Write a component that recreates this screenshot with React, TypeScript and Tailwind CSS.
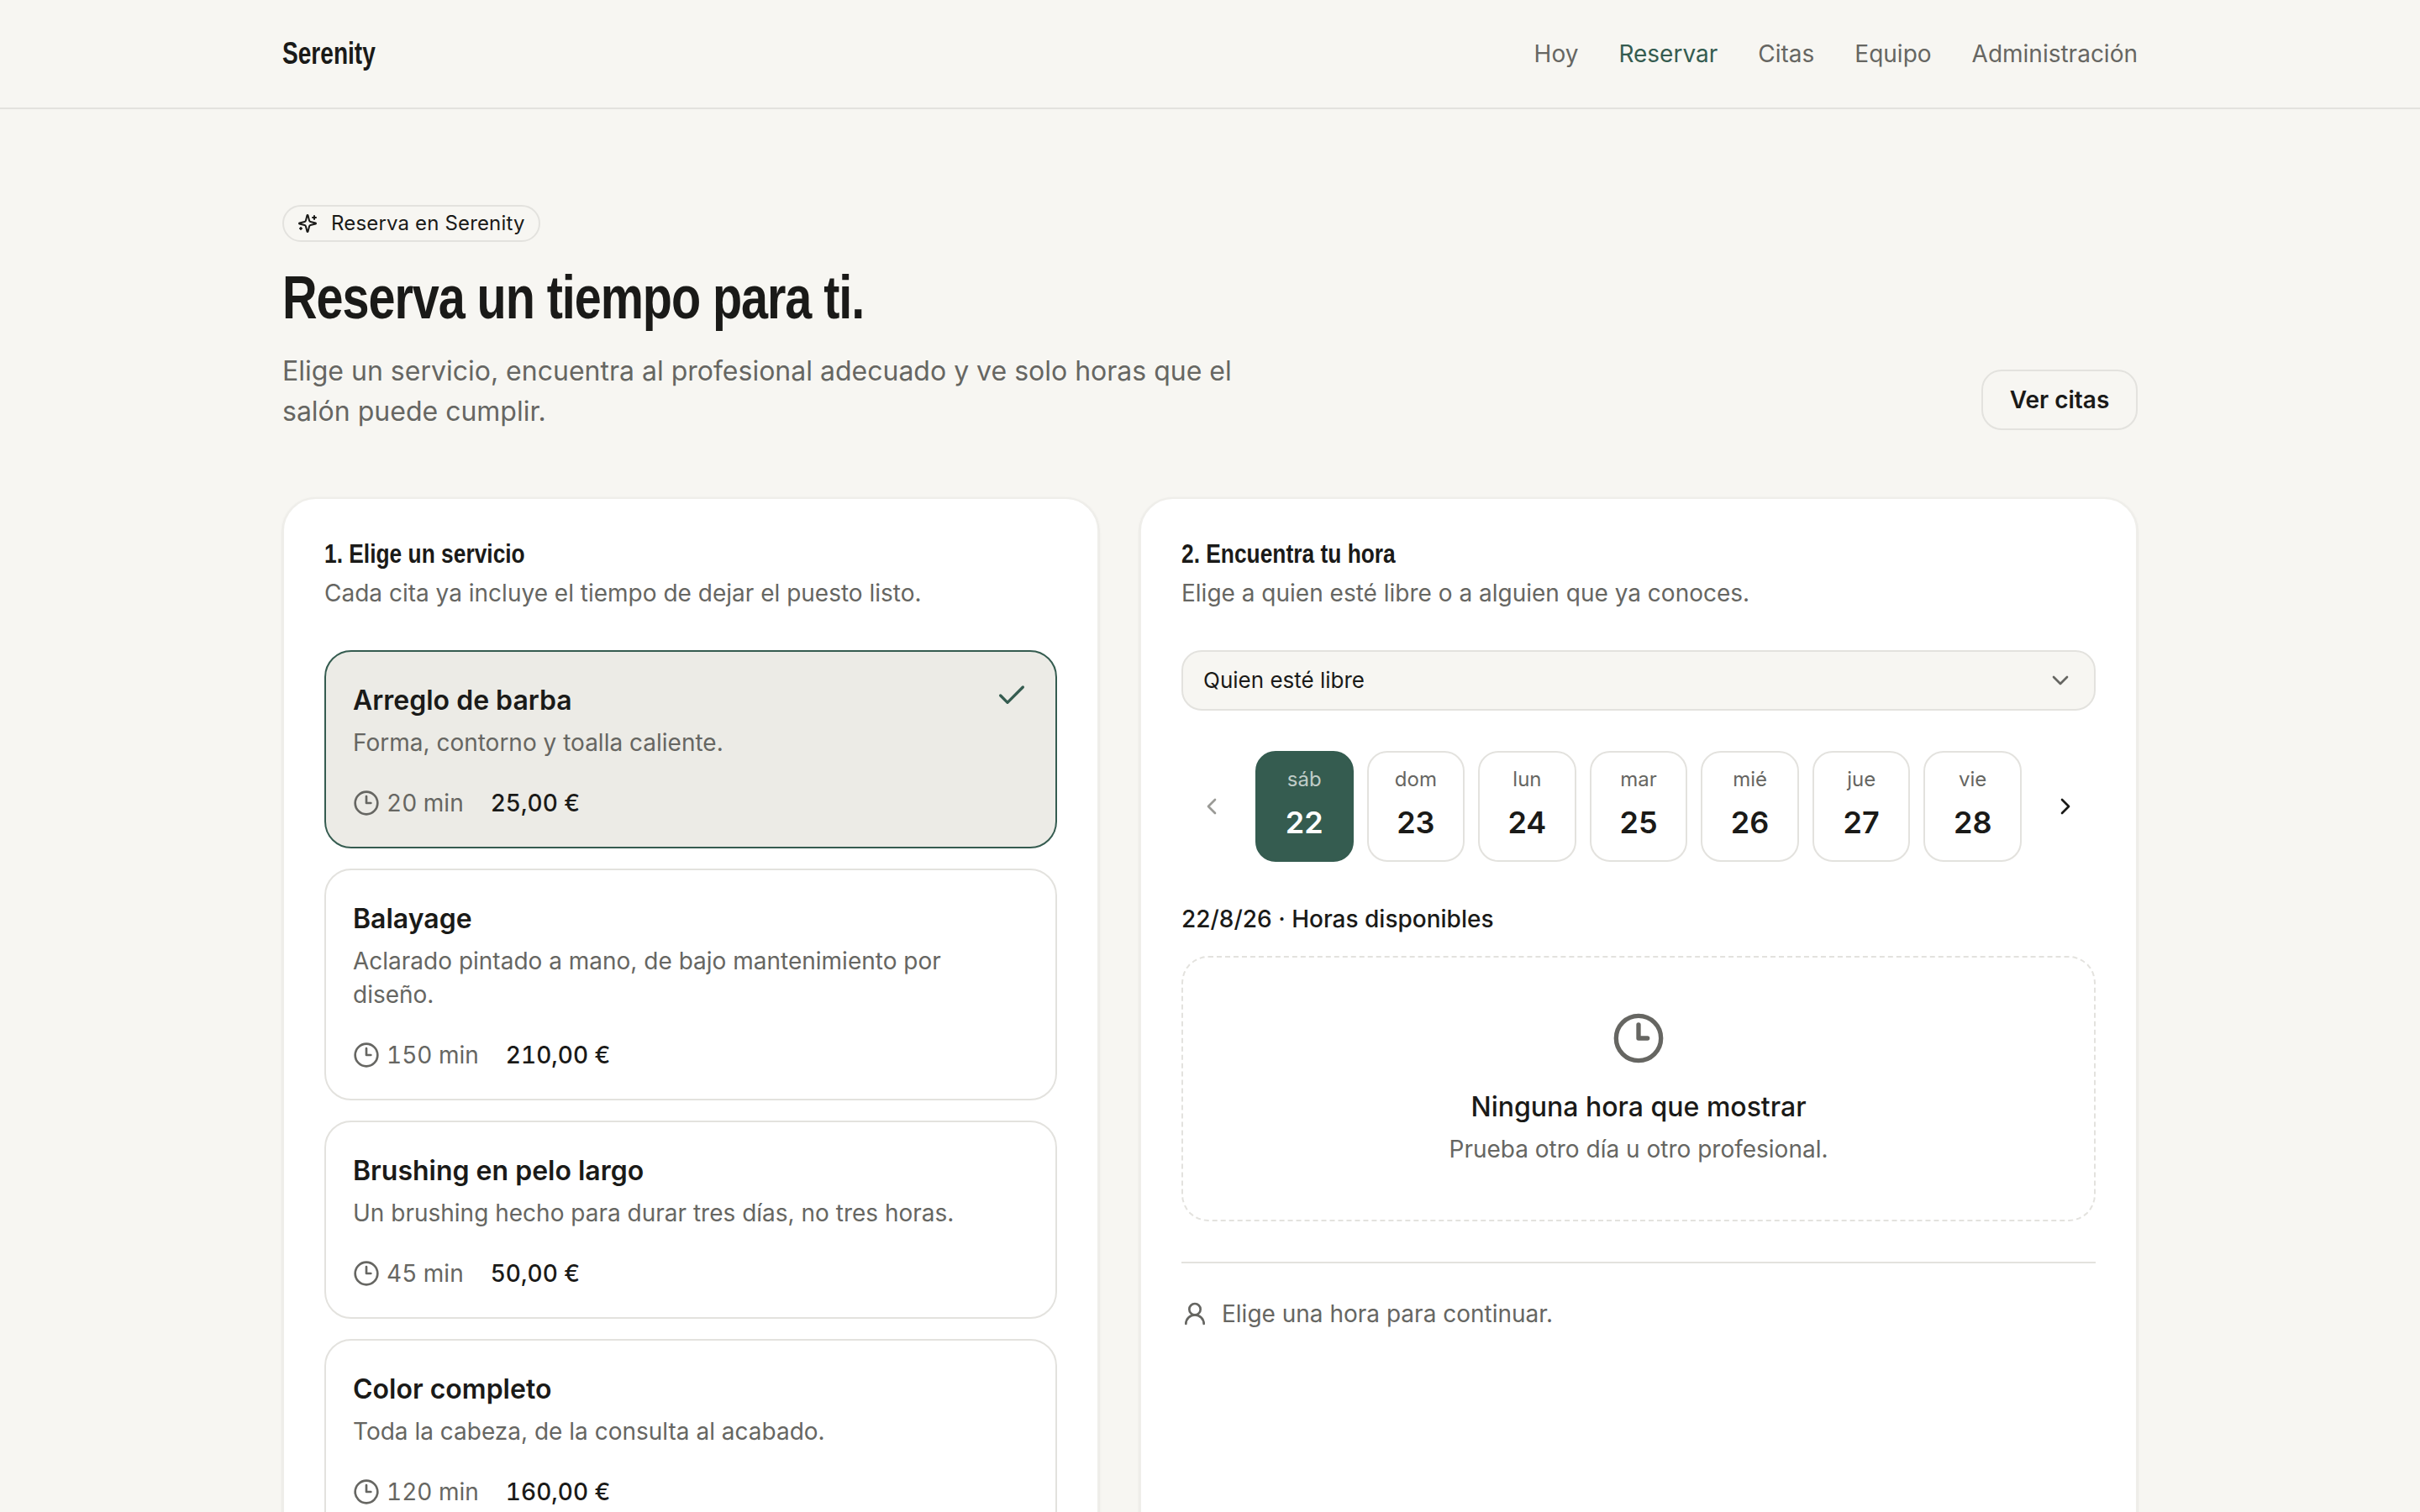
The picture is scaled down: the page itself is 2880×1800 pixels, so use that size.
import { Check, ChevronDown, ChevronLeft, ChevronRight, UserRound } from "lucide-react"

const bodyFont = { fontFamily: "Inter, sans-serif" }

const navItems = ["Hoy", "Reservar", "Citas", "Equipo", "Administración"]

const services = [
  { name: "Arreglo de barba", desc: "Forma, contorno y toalla caliente.", mins: "20 min", price: "25,00 €", selected: true },
  { name: "Balayage", desc: "Aclarado pintado a mano, de bajo mantenimiento por diseño.", mins: "150 min", price: "210,00 €" },
  { name: "Brushing en pelo largo", desc: "Un brushing hecho para durar tres días, no tres horas.", mins: "45 min", price: "50,00 €" },
  { name: "Color completo", desc: "Toda la cabeza, de la consulta al acabado.", mins: "120 min", price: "160,00 €" },
]

const days = [
  { label: "sáb", num: 22, active: true },
  { label: "dom", num: 23 },
  { label: "lun", num: 24 },
  { label: "mar", num: 25 },
  { label: "mié", num: 26 },
  { label: "jue", num: 27 },
  { label: "vie", num: 28 },
]

function ClockIcon({ size, className }: { size: number; className?: string }) {
  return (
    <svg
      width={size}
      height={size}
      viewBox="0 0 24 24"
      fill="none"
      stroke="currentColor"
      strokeWidth="2"
      strokeLinecap="round"
      strokeLinejoin="round"
      className={className}
    >
      <circle cx="12" cy="12" r="10" />
      <path d="M12 6v6h4" />
    </svg>
  )
}

function SparkleIcon() {
  return (
    <svg
      width={24}
      height={24}
      viewBox="0 0 24 24"
      fill="none"
      stroke="currentColor"
      strokeWidth="2"
      strokeLinecap="round"
      strokeLinejoin="round"
    >
      <path d="M9.937 15.5A2 2 0 0 0 8.5 14.063l-6.135-1.582a.5.5 0 0 1 0-.962L8.5 9.936A2 2 0 0 0 9.937 8.5l1.582-6.135a.5.5 0 0 1 .963 0L14.063 8.5A2 2 0 0 0 15.5 9.937l6.135 1.581a.5.5 0 0 1 0 .964L15.5 14.063a2 2 0 0 0-1.437 1.437l-1.582 6.135a.5.5 0 0 1-.963 0z" />
      <path d="M20 3v4" />
      <path d="M22 5h-4" />
      <path d="M4 17v2" />
      <path d="M5 18H3" />
    </svg>
  )
}

export default function App() {
  return (
    <div className="h-[1800px] overflow-hidden bg-[#f7f6f2] text-[#1a1a18]" style={bodyFont}>
      {/* Top bar */}
      <header className="h-[130px] border-b-2 border-[#e3e2de]">
        <div className="mx-auto flex h-full w-[2208px] items-center justify-between">
          <span className="inline-block origin-left scale-x-[0.78] font-['Liberation_Sans',sans-serif] text-[36px] font-bold">
            Serenity
          </span>
          <nav className="flex items-center gap-12 text-[28px] text-[#666662]">
            {navItems.map((item) => (
              <a key={item} className={item === "Reservar" ? "text-[#355c50]" : ""}>
                {item}
              </a>
            ))}
          </nav>
        </div>
      </header>

      <main className="mx-auto w-[2208px] pt-[114px]">
        {/* Hero */}
        <div className="flex items-end justify-between">
          <div>
            <div className="inline-flex h-[44px] items-center gap-4 rounded-full border-2 border-[#e3e2de] px-4 text-[24px] tracking-[0.16px]">
              <SparkleIcon />
              Reserva en Serenity
            </div>
            <h1 className="mt-[23px] origin-left scale-x-[0.8] font-['Liberation_Sans',sans-serif] text-[72px] leading-[86px] font-bold tracking-[-1.35px] whitespace-nowrap">
              Reserva un tiempo para ti.
            </h1>
            <p className="mt-[21px] w-[1152px] text-[32px] leading-[48px] text-[#666662]">
              Elige un servicio, encuentra al profesional adecuado y ve solo horas que el salón puede cumplir.
            </p>
          </div>
          <button className="mb-[2px] h-[72px] w-[186px] rounded-3xl border-2 border-[#e3e2de] text-[28px] font-semibold">
            Ver citas
          </button>
        </div>

        <div className="mt-[78px] grid grid-cols-[972px_1188px] gap-12">
          {/* Services */}
          <section className="rounded-[40px] border-2 border-[#efeeea] bg-white p-12 shadow-sm">
            <h2 className="mb-[2px] origin-left scale-x-[0.85] font-['Liberation_Sans',sans-serif] text-[31px] leading-[36px] font-bold">
              1. Elige un servicio
            </h2>
            <p className="mt-2 text-[28px] leading-[40px] text-[#666662]">
              Cada cita ya incluye el tiempo de dejar el puesto listo.
            </p>
            <div className="mt-[48px] flex flex-col gap-6">
              {services.map((s) => (
                <div
                  key={s.name}
                  className={`rounded-[32px] border-2 p-8 ${
                    s.selected ? "border-[#355c50] bg-[#ecebe6]" : "border-[#e3e2de] bg-white"
                  }`}
                >
                  <div className="flex justify-between">
                    <div>
                      <div className="pt-[2px] text-[32px] leading-[48px] font-semibold">{s.name}</div>
                      <div className="mt-[6px] text-[28px] leading-[40px] text-[#666662]">{s.desc}</div>
                    </div>
                    {s.selected && <Check size={40} className="shrink-0 text-[#355c50]" />}
                  </div>
                  <div className="mt-8 flex items-center gap-8 text-[28px] leading-[40px] tabular-nums">
                    <span className="flex items-center gap-2 text-[#666662]">
                      <ClockIcon size={32} />
                      {s.mins}
                    </span>
                    <span className="font-medium">{s.price}</span>
                  </div>
                </div>
              ))}
            </div>
          </section>

          {/* Time picker */}
          <section className="rounded-[40px] border-2 border-[#efeeea] bg-white p-12 shadow-sm">
            <h2 className="mb-[2px] origin-left scale-x-[0.85] font-['Liberation_Sans',sans-serif] text-[31px] leading-[36px] font-bold">
              2. Encuentra tu hora
            </h2>
            <p className="mt-2 text-[28px] leading-[40px] text-[#666662]">
              Elige a quien esté libre o a alguien que ya conoces.
            </p>
            <div className="mt-[48px] flex h-[72px] items-center justify-between rounded-3xl border-2 border-[#e3e2de] bg-[#f7f6f2] px-6 text-[26px]">
              <span className="pb-[2px]">Quien esté libre</span>
              <ChevronDown size={32} className="text-[#666662]" />
            </div>
            <div className="mt-12 flex items-center gap-4">
              <button className="flex w-[72px] shrink-0 justify-center text-[#9a9a96]">
                <ChevronLeft size={32} />
              </button>
              <div className="grid flex-1 grid-cols-7 gap-4">
                {days.map((d) => (
                  <div
                    key={d.num}
                    className={`flex h-[132px] flex-col items-center rounded-3xl border-2 pt-4 ${
                      d.active ? "border-[#355c50] bg-[#355c50] text-white" : "border-[#e3e2de] bg-white"
                    }`}
                  >
                    <span className={`text-[24px] leading-[32px] ${d.active ? "text-white/70" : "text-[#666662]"}`}>
                      {d.label}
                    </span>
                    <span className="mt-[11px] text-[36px] leading-[48px] font-semibold">{d.num}</span>
                  </div>
                ))}
              </div>
              <button className="flex w-[72px] shrink-0 justify-center">
                <ChevronRight size={32} />
              </button>
            </div>
            <h3 className="mt-[48px] text-[28px] leading-[40px] font-medium">22/8/26 · Horas disponibles</h3>
            <div className="mt-6 flex h-[316px] flex-col items-center rounded-[32px] border-2 border-dashed border-[#e3e2de] pt-16">
              <ClockIcon size={64} className="text-[#666662]" />
              <div className="mt-[26px] text-[32px] leading-[48px] font-medium">Ninguna hora que mostrar</div>
              <div className="mt-[6px] text-[28px] leading-[40px] text-[#666662]">Prueba otro día u otro profesional.</div>
            </div>
            <div className="mt-12 flex items-center gap-4 border-t-2 border-[#e3e2de] pt-[30px] text-[28px] leading-[60px] text-[#666662]">
              <UserRound size={32} />
              Elige una hora para continuar.
            </div>
          </section>
        </div>
      </main>
    </div>
  )
}
